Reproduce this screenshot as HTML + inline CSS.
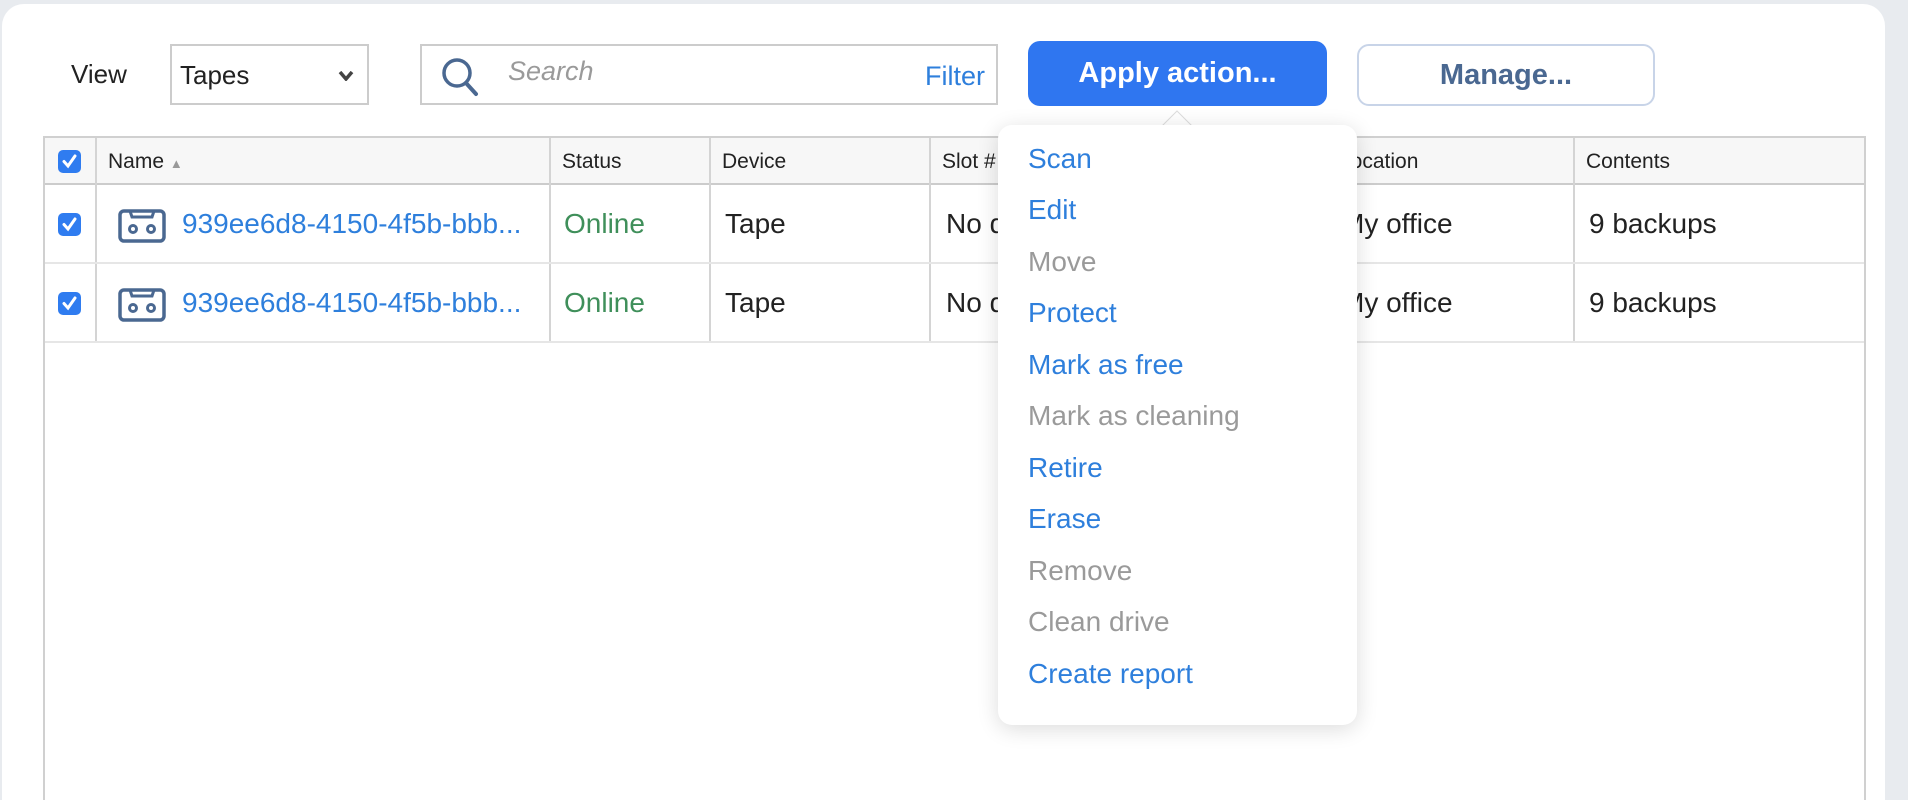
<!DOCTYPE html>
<html style="overflow:hidden;height:800px"><head><meta charset="utf-8"><style>
*{box-sizing:border-box;margin:0;padding:0}
body{width:1908px;height:800px;background:#e8ebef;font-family:"Liberation Sans",Arial,sans-serif;overflow:hidden;position:relative}
.card{position:absolute;left:2px;top:4px;width:1883px;height:796px;background:#fff;border-radius:22px 22px 0 0}
.abs{position:absolute}
.view{left:71px;top:59px;font-size:26px;color:#222}
.sel{left:170px;top:44px;width:199px;height:61px;border:2px solid #ccc;font-size:26px;color:#222;padding:14px 0 0 8px}
.search{left:420px;top:44px;width:578px;height:61px;border:2px solid #ccc}
.btn{left:1028px;top:41px;width:299px;height:65px;background:#2f76f0;border-radius:12px;color:#fff;font-weight:bold;font-size:29px;text-align:center;line-height:65px}
.mng{left:1357px;top:44px;width:298px;height:62px;border:2px solid #c8d4e8;border-radius:12px;color:#4a6891;font-weight:bold;font-size:29px;text-align:center;line-height:58px}
.tbl{left:43px;top:136px;width:1823px;height:664px;border:2px solid #d0d0d0;border-bottom:none}
.hdr{left:0;top:0;width:100%;height:47px;background:#f7f7f7;border-bottom:2px solid #ccc}
.vl{position:absolute;top:0;width:2px;height:205px;background:#d4d4d4}
.row{position:absolute;left:0;width:100%;height:79px;border-bottom:2px solid #e6e6e6}
.h{position:absolute;top:12px;font-size:21px;color:#222}
.c{position:absolute;font-size:28px;color:#222;top:23px}
.cb{position:absolute;left:13px;width:23px;height:23px;background:#2f7cf0;border-radius:5px}
.menu{left:998px;top:125px;width:359px;height:600px;background:#fff;border-radius:14px;box-shadow:0 4px 22px rgba(0,0,0,.14)}
.mi{position:absolute;left:30px;font-size:28px}
.b{color:#2e7fdc}.g{color:#9a9a9a}
</style></head><body>
<div class="card"></div>
<div class="abs view">View</div>
<div class="abs sel">Tapes<svg class="abs" style="left:166px;top:25px" width="16" height="10" viewBox="0 0 16 10"><path d="M2 1 L8 8 L14 1" stroke="#444" stroke-width="3.5" fill="none"/></svg></div>
<div class="abs search">
<svg class="abs" style="left:18px;top:10px" width="40" height="42" viewBox="0 0 40 42"><circle cx="17" cy="17" r="13" stroke="#4a6891" stroke-width="3.5" fill="none"/><path d="M26 27 L36 38" stroke="#4a6891" stroke-width="4" stroke-linecap="round"/></svg>
<div class="abs" style="left:86px;top:10px;font-size:27px;font-style:italic;color:#9a9a9a">Search</div>
<div class="abs" style="left:503px;top:15px;font-size:27px;color:#2e7fdc">Filter</div>
</div>
<div class="abs btn">Apply action...</div>
<div class="abs mng">Manage...</div>
<div class="abs tbl">
<div class="abs hdr"></div>
<div class="vl" style="left:50px"></div><div class="vl" style="left:504px"></div><div class="vl" style="left:664px"></div><div class="vl" style="left:884px"></div><div class="vl" style="left:1281px"></div><div class="vl" style="left:1528px"></div>
<div class="cb" style="top:12px"><svg width="23" height="23" viewBox="0 0 23 23"><path d="M6 11.5 L10 16 L17 6" stroke="#fff" stroke-width="3" fill="none" stroke-linecap="round"/></svg></div>
<div class="h" style="left:63px">Name <span style="color:#999;font-size:13px">&#9650;</span></div>
<div class="h" style="left:517px">Status</div><div class="h" style="left:677px">Device</div><div class="h" style="left:897px">Slot #</div><div class="h" style="left:1294px">Location</div><div class="h" style="left:1541px">Contents</div>
<div class="row" style="top:47px">
<div class="cb" style="top:28px"><svg width="23" height="23" viewBox="0 0 23 23"><path d="M6 11.5 L10 16 L17 6" stroke="#fff" stroke-width="3" fill="none" stroke-linecap="round"/></svg></div>
<svg class="abs" style="left:73px;top:24px" width="48" height="34" viewBox="0 0 48 34"><rect x="2" y="2" width="44" height="30" rx="4" stroke="#4a6891" stroke-width="3.5" fill="none"/><path d="M12 2 L14 8 L34 8 L36 2" stroke="#4a6891" stroke-width="3" fill="none"/><circle cx="15" cy="20" r="3.5" stroke="#4a6891" stroke-width="3" fill="none"/><circle cx="33" cy="20" r="3.5" stroke="#4a6891" stroke-width="3" fill="none"/></svg>
<div class="c b" style="left:137px">939ee6d8-4150-4f5b-bbb...</div><div class="c" style="left:519px;color:#3f8f5a">Online</div><div class="c" style="left:680px">Tape</div><div class="c" style="left:901px">No data</div><div class="c" style="left:1296px">My office</div><div class="c" style="left:1544px">9 backups</div>
</div>
<div class="row" style="top:126px">
<div class="cb" style="top:28px"><svg width="23" height="23" viewBox="0 0 23 23"><path d="M6 11.5 L10 16 L17 6" stroke="#fff" stroke-width="3" fill="none" stroke-linecap="round"/></svg></div>
<svg class="abs" style="left:73px;top:24px" width="48" height="34" viewBox="0 0 48 34"><rect x="2" y="2" width="44" height="30" rx="4" stroke="#4a6891" stroke-width="3.5" fill="none"/><path d="M12 2 L14 8 L34 8 L36 2" stroke="#4a6891" stroke-width="3" fill="none"/><circle cx="15" cy="20" r="3.5" stroke="#4a6891" stroke-width="3" fill="none"/><circle cx="33" cy="20" r="3.5" stroke="#4a6891" stroke-width="3" fill="none"/></svg>
<div class="c b" style="left:137px">939ee6d8-4150-4f5b-bbb...</div><div class="c" style="left:519px;color:#3f8f5a">Online</div><div class="c" style="left:680px">Tape</div><div class="c" style="left:901px">No data</div><div class="c" style="left:1296px">My office</div><div class="c" style="left:1544px">9 backups</div>
</div>
</div>
<svg class="abs" style="left:1161px;top:110px" width="32" height="18" viewBox="0 0 32 18"><path d="M0 17 L16 1 L32 17" fill="#fff" stroke="#ddd" stroke-width="1"/></svg>
<div class="abs menu">
<div class="mi b" style="top:18px">Scan</div>
<div class="mi b" style="top:69px">Edit</div>
<div class="mi g" style="top:121px">Move</div>
<div class="mi b" style="top:172px">Protect</div>
<div class="mi b" style="top:224px">Mark as free</div>
<div class="mi g" style="top:275px">Mark as cleaning</div>
<div class="mi b" style="top:327px">Retire</div>
<div class="mi b" style="top:378px">Erase</div>
<div class="mi g" style="top:430px">Remove</div>
<div class="mi g" style="top:481px">Clean drive</div>
<div class="mi b" style="top:533px">Create report</div>
</div>
</body></html>
